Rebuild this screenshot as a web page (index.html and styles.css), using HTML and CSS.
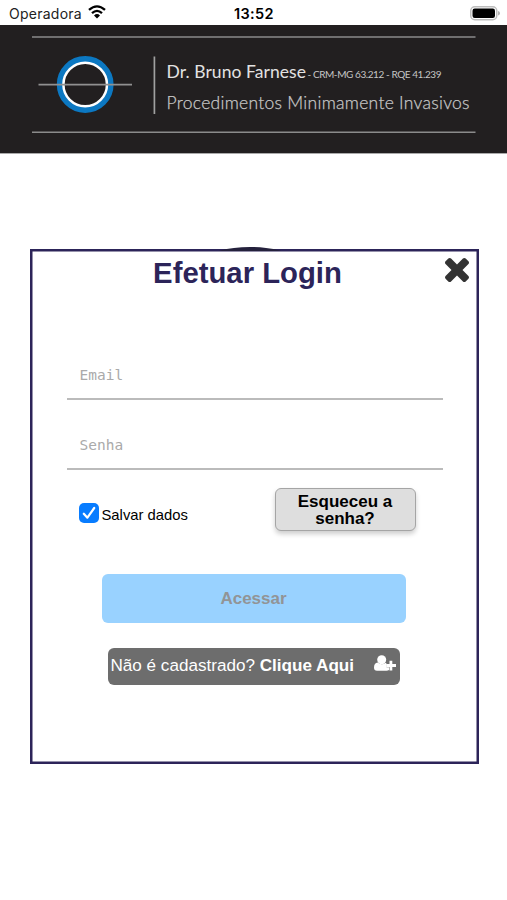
FILE: index.html
```html
<!DOCTYPE html>
<html lang="pt-BR">
<head>
<meta charset="utf-8">
<title>Efetuar Login</title>
<link rel="stylesheet" href="styles.css">
</head>
<body>
<div class="status">
  <div class="carrier"><span>Operadora</span>
    <svg class="wifi" width="18" height="14" viewBox="0 0 18 14" fill="none" stroke="#000" stroke-width="2.3"><path d="M1 4.9Q9-2.2 17 4.9M4 8.2Q9 3.6 14 8.2"/><path d="M6 10.4Q9 7.7 12 10.4L9 13.5Z" fill="#000" stroke="none"/></svg>
  </div>
  <div class="time">13:52</div>
  <svg class="battery" width="31" height="15" viewBox="0 0 31 15"><rect x=".75" y=".75" width="26" height="13" rx="4" fill="#fff" stroke="#bdbdbd" stroke-width="1.5"/><rect x="2.5" y="2.5" width="22.5" height="9.5" rx="2.2"/><path d="M28 5Q30 5.5 30 7.3T28 9.6Z" fill="#b5b5b5"/></svg>
</div>
<header class="brand">
  <svg width="507" height="128" viewBox="0 0 507 128">
    <g stroke="#8b8b8b" stroke-width="1.4"><path d="M32 12H475.500M32 107.200H475.500"/></g>
    <circle cx="85.200" cy="59.500" r="25.400" fill="none" stroke="#0c78c2" stroke-width="6"/>
    <circle cx="85.200" cy="59.500" r="21.800" fill="none" stroke="#fff" stroke-width="2.500"/>
    <path d="M38.500 59.700H132" stroke="#909090" stroke-width="1.700"/>
    <path d="M154.400 31.500V89" stroke="#a0a0a0" stroke-width="1.700"/>
    <text class="name" x="166.500" y="53" textLength="139.500">Dr. Bruno Farnese</text>
    <text class="reg" x="307.500" y="53" textLength="134">- CRM-MG 63.212 - RQE 41.239</text>
    <text class="tag" x="166.500" y="83.500" textLength="303">Procedimentos Minimamente Invasivos</text>
  </svg>
</header>
<main>
  <section class="modal">
    <div class="arc"><i></i></div>
    <div class="top">
      <h1>Efetuar Login</h1>
      <button class="close" aria-label="Fechar"><svg width="24" height="24" viewBox="302 366 1188 1188" fill="#333"><path d="M1490 1322q0 40-28 68l-136 136q-28 28-68 28t-68-28l-294-294-294 294q-28 28-68 28t-68-28l-136-136q-28-28-28-68t28-68l294-294-294-294q-28-28-28-68t28-68l136-136q28-28 68-28t68 28l294 294 294-294q28-28 68-28t68 28l136 136q28 28 28 68t-28 68l-294 294 294 294q28 28 28 68z"/></svg></button>
    </div>
    <form>
      <div class="field">Email</div>
      <div class="field">Senha</div>
      <div class="options">
        <div class="save"><svg width="20" height="20" viewBox="0 0 20 20"><rect width="20" height="20" rx="5" fill="#087cff"/><path d="M4.800 10.700 8.400 14.700 15.200 5" fill="none" stroke="#fff" stroke-width="2.200" stroke-linecap="round" stroke-linejoin="round"/></svg><span>Salvar dados</span></div>
        <button type="button" class="forgot">Esqueceu a<br>senha?</button>
      </div>
      <button type="button" class="submit">Acessar</button>
      <div class="register"><span>Não é cadastrado? <b>Clique Aqui</b></span>
        <svg width="22" height="17" viewBox="0 0 22 17" fill="#fff"><circle cx="7.700" cy="4.700" r="4.500"/><path d="M3.700 7.600Q7.700 11 11.500 7.700L12.500 8.500V12.200H15V15Q14 15.800 12.500 15.800H3Q0 15.800 0 12.500 0 8 3.700 7.600Z"/><path d="M15.500 5.800h2.800v3.300H22v2.800h-3.700V15.500h-2.800v-3.600h-3.300V9.100h3.300Z"/></svg>
      </div>
    </form>
  </section>
</main>
</body>
</html>
```
FILE: styles.css
```css
* { box-sizing: border-box; }
body { margin: 0; background: #fff; color: #000; font-family: "Liberation Sans", Arial, sans-serif; }
button { margin: 0; padding: 0; border: 0; font-family: inherit; }
svg { display: block; flex: none; }
.status { height: 25px; display: grid; grid-template-columns: 1fr auto 1fr; align-items: center; padding: 2px 6px 0 9px; font-family: Inter, sans-serif; font-size: 14px; line-height: 20px; }
.carrier { display: flex; align-items: center; gap: 6px; color: #222; letter-spacing: .25px; }
.wifi { margin-top: -3px; }
.time { margin-left: -2px; font-weight: 600; font-size: 14.500px; letter-spacing: .4px; }
.battery { justify-self: end; margin-top: -1px; }
.brand { height: 128.500px; background: #221f20; border-bottom: 1px solid #aaa; }
.brand text { font-family: Lato, sans-serif; }
.name { font-size: 17.500px; fill: #e2e2e2; }
.reg { font-size: 10px; fill: #c6c6c6; }
.tag { font-size: 17.500px; font-weight: 300; fill: #c6c6c6; stroke: #c6c6c6; stroke-width: .25px; }
main { padding: 95.500px 28.500px 0 29.500px; }
.modal { position: relative; height: 515px; border: 2px solid #2c2459; box-shadow: inset 0 0 0 .5px #2c2459; }
.arc { position: absolute; left: 176px; top: -4px; width: 84px; height: 4px; overflow: hidden; }
.arc i { display: block; width: 84px; height: 24px; border-radius: 50%; background: #24213c; }
.top { display: grid; grid-template-columns: 39px 1fr 39px; align-items: start; }
h1 { grid-column: 2; margin: 4px 0 0; padding-right: 13px; text-align: center; font-size: 29.300px; line-height: 36px; color: #2c2459; }
.close { margin: 7px 0 0 7px; background: none; justify-self: start; }
form { padding: 63px 34px 0 35px; }
.field { height: 46px; margin-bottom: 24px; padding: 10px 13px; border-bottom: 2px solid #bbb; color: #aaa; font: 14.500px/22px "DejaVu Sans Mono", monospace; }
.options { display: flex; justify-content: space-between; padding: 0 27px 0 12px; margin-top: -5px; }
.save { display: flex; align-items: center; gap: 3px; height: 20px; margin-top: 14px; font-size: 14.800px; }
.save span { padding-top: 4px; }
.forgot { width: 141px; height: 43px; margin-top: -1px; border: 1.500px solid #a5a5a5; border-radius: 6px; background: #dedede; box-shadow: 0 3px 5px #0003; color: #000; font-size: 17px; line-height: 17px; font-weight: bold; padding-top: 1px; }
.submit { display: block; width: 304px; height: 49px; margin: 43px 0 0 35px; border-radius: 6px; background: #99d2ff; color: #929496; font-size: 17px; font-weight: bold; }
.register { display: flex; align-items: center; justify-content: space-between; width: 292px; height: 37px; margin: 25px 0 0 41px; padding: 0 4px 2px 3px; border-radius: 6px; background: #6d6d6d; color: #fff; font-size: 17.100px; }
.register svg { margin-top: -4px; }
```
